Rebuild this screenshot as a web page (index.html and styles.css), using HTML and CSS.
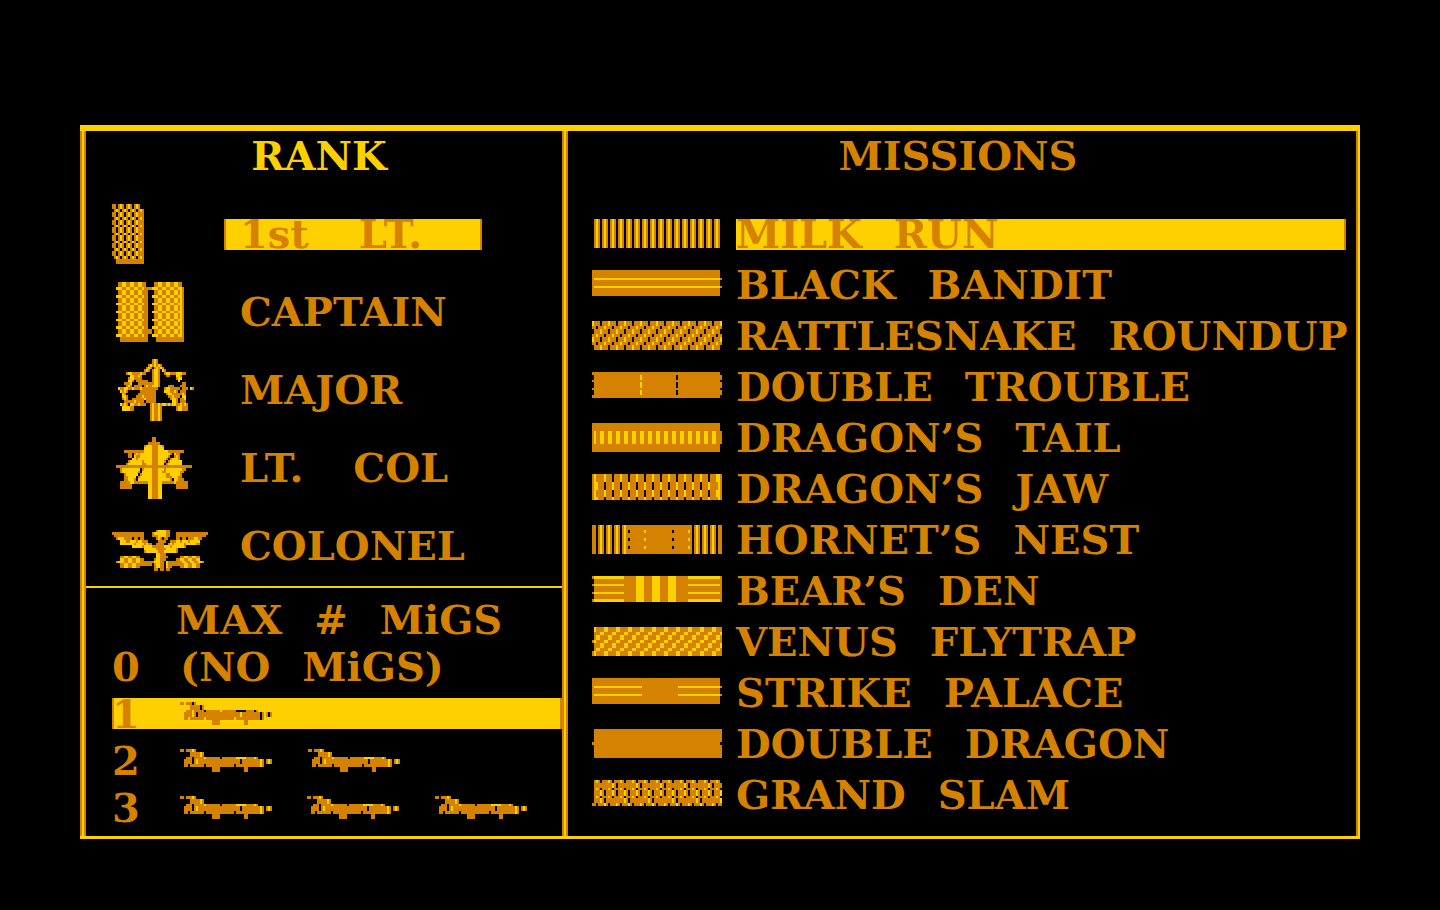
FILE: index.html
```html
<!DOCTYPE html>
<html lang="en">
<head>
<meta charset="utf-8">
<title>Rank and Missions</title>
<link rel="stylesheet" href="styles.css">
</head>
<body>
<main class="frame">
  <div class="side">
    <section class="ranks">
      <h2 class="title title-active">RANK</h2>
      <button class="rank selected" type="button"><span class="insignia" data-sprite="lieutenant"></span><span class="rank-name">1st <span class="word">LT.</span></span></button>
      <button class="rank" type="button"><span class="insignia" data-sprite="captain"></span><span class="rank-name">CAPTAIN</span></button>
      <button class="rank" type="button"><span class="insignia" data-sprite="major"></span><span class="rank-name">MAJOR</span></button>
      <button class="rank" type="button"><span class="insignia" data-sprite="ltcol"></span><span class="rank-name">LT. <span class="word">COL</span></span></button>
      <button class="rank" type="button"><span class="insignia" data-sprite="colonel"></span><span class="rank-name">COLONEL</span></button>
    </section>
    <section class="migs">
      <h2 class="migs-title">MAX <span class="word">#</span> <span class="word">MiGS</span></h2>
      <button class="mig" type="button"><span class="count">0</span><span>(NO <span class="word">MiGS)</span></span></button>
      <button class="mig selected" type="button"><span class="count">1</span><span class="plane" data-sprite="planeDark"></span></button>
      <button class="mig" type="button"><span class="count">2</span><span class="plane" data-sprite="plane"></span><span class="plane" data-sprite="plane"></span></button>
      <button class="mig" type="button"><span class="count">3</span><span class="plane" data-sprite="plane"></span><span class="plane" data-sprite="plane"></span><span class="plane" data-sprite="plane"></span></button>
    </section>
  </div>
  <section class="missions">
    <h2 class="title">MISSIONS</h2>
    <div class="mission-list">
      <button class="mission selected" type="button"><span class="ribbon" data-sprite="milkRun"></span><span class="mission-name">MILK <span class="word">RUN</span></span></button>
      <button class="mission" type="button"><span class="ribbon" data-sprite="blackBandit"></span><span class="mission-name">BLACK <span class="word">BANDIT</span></span></button>
      <button class="mission" type="button"><span class="ribbon" data-sprite="rattlesnake"></span><span class="mission-name">RATTLESNAKE <span class="word">ROUNDUP</span></span></button>
      <button class="mission" type="button"><span class="ribbon" data-sprite="doubleTrouble"></span><span class="mission-name">DOUBLE <span class="word">TROUBLE</span></span></button>
      <button class="mission" type="button"><span class="ribbon" data-sprite="dragonsTail"></span><span class="mission-name">DRAGON’S <span class="word">TAIL</span></span></button>
      <button class="mission" type="button"><span class="ribbon" data-sprite="dragonsJaw"></span><span class="mission-name">DRAGON’S <span class="word">JAW</span></span></button>
      <button class="mission" type="button"><span class="ribbon" data-sprite="hornetsNest"></span><span class="mission-name">HORNET’S <span class="word">NEST</span></span></button>
      <button class="mission" type="button"><span class="ribbon" data-sprite="bearsDen"></span><span class="mission-name">BEAR’S <span class="word">DEN</span></span></button>
      <button class="mission" type="button"><span class="ribbon" data-sprite="venus"></span><span class="mission-name">VENUS <span class="word">FLYTRAP</span></span></button>
      <button class="mission" type="button"><span class="ribbon" data-sprite="strike"></span><span class="mission-name">STRIKE <span class="word">PALACE</span></span></button>
      <button class="mission" type="button"><span class="ribbon" data-sprite="doubleDragon"></span><span class="mission-name">DOUBLE <span class="word">DRAGON</span></span></button>
      <button class="mission" type="button"><span class="ribbon" data-sprite="grandSlam"></span><span class="mission-name">GRAND <span class="word">SLAM</span></span></button>
    </div>
  </section>
</main>
<script src="sprites.js"></script>
</body>
</html>
```
FILE: styles.css
```css
:root {
  --gold: #ffd000;
  --amber: #d48200;
}

* { box-sizing: border-box; }

body {
  margin: 0;
  min-height: 100vh;
  padding: 125px 80px 64px;
  background: #000;
  color: var(--amber);
  font: bold 40px/30px "DejaVu Serif", serif;
}

button {
  border: 0;
  padding: 0;
  background: none;
  color: inherit;
  font: inherit;
  text-align: left;
  white-space: nowrap;
  cursor: pointer;
}

.frame {
  display: grid;
  grid-template-columns: minmax(0, 488fr) minmax(0, 792fr);
  border-top: 6px solid var(--gold);
  border-bottom: 3px solid var(--gold);
}

.side {
  border: solid var(--amber);
  border-width: 0 2px;
  display: flex;
  flex-direction: column;
  box-shadow: inset 2px 0 var(--gold), inset 4px 0 var(--amber), inset -2px 0 var(--gold), inset -4px 0 var(--amber);
  padding: 0 4px;
}

.title {
  margin: 0;
  padding: 10px 10px 0 0;
  font-size: 40px;
  text-align: center;
}

.title-active {
  margin-bottom: 24px;
  color: var(--gold);
}

.ranks {
  display: flex;
  flex-direction: column;
  padding-bottom: 1px;
  border-bottom: 2px solid var(--gold);
}

.rank {
  display: grid;
  grid-template-columns: 112px 258px;
  align-items: center;
  height: 78px;
  padding-left: 26px;
}

.rank-name {
  height: 31px;
  padding-left: 16px;
}

.rank.selected .rank-name {
  background: var(--gold);
  box-shadow: inset 2px 0 var(--amber), inset -2px 0 var(--amber);
}

.word { margin-left: 18px; }

.rank .word { margin-left: 36px; }

.migs {
  display: flex;
  flex-direction: column;
  gap: 16px;
  padding: 16px 0 13px 26px;
}

.migs-title {
  margin: 0;
  padding-left: 64px;
  font-size: 40px;
  line-height: 31px;
}

.mig {
  display: flex;
  align-items: center;
  height: 31px;
}

.mig.selected {
  background: var(--gold);
  box-shadow: inset 2px 0 var(--amber), inset -2px 0 var(--amber);
}

.count { width: 68px; }

.plane { width: 128px; }

.missions {
  border-right: 2px solid var(--gold);
  box-shadow: inset -2px 0 var(--amber);
}

.mission-list {
  display: flex;
  flex-direction: column;
  gap: 20px;
  padding: 48px 12px 0 24px;
}

.mission {
  display: grid;
  grid-template-columns: 144px minmax(0, 1fr);
  align-items: start;
}

.mission-name { height: 31px; }

.mission.selected .mission-name {
  background: var(--gold);
  box-shadow: inset -2px 0 var(--amber);
}

.sprite { display: block; }
```
FILE: sprites.js
```js
// Sprite cells are 2 units wide and 2.6 units high; o = amber, y = gold, k = black.
const COLORS = { o: "#d48200", y: "#ffd000", k: "#000" };

function between(v, a, b) { return v >= a && v <= b; }
function every(c, start, step) { return ((c - start) % step + step) % step === 0; }

function grid(cols, rows, cell) {
  return Array.from({ length: rows }, (_, r) =>
    Array.from({ length: cols }, (_, c) => cell(c, r)).join(""));
}

function indent(count, rows) { return rows.map(row => ".".repeat(count) + row); }

// Step number for rows grouped as 2,1,2,1,...
function step(r) { return Math.floor(r / 3) * 2 + (r % 3 === 2 ? 1 : 0); }

const plane = [
  "oo.oooyo",
  ".....oooooyo",
  ".....oooooyo",
  "...ooo.oooooyooooooo.oooooooyyyyyooooyo",
  "..oooo.oyooooooooooooooooooooo.oooooooooyo.oyo",
  "..oooo.oyooooooooooooooooooooo.oooooooooyo.oyo",
  "..oo.ooooooo.oooooooooooooo.ooooooooooooyo",
  "................oooo............oo",
  "................oooo............oo"
];

const SPRITES = {
  plane,
  planeDark: plane.map(row => row.replace(/y/g, "k")),

  lieutenant: grid(16, 23, (c, r) => {
    if (r > 20) return c > 1 ? "o" : ".";
    if (r < 2 && c > 13) return ".";
    const thin = r % 3 === 2;
    if (c > 13) return thin && c === 14 ? "y" : "o";
    if (c % 2) return "o";
    if (thin) return c % 4 === 2 ? "y" : ".";
    return c === 0 ? "o" : c % 4 === 0 ? "y" : ".";
  }),

  captain: indent(2, grid(34, 23, (c, r) => {
    const n = c % 18;
    if (c > 15 && c < 18) return r === 2 || r === 18 || r === 19 ? "o" : ".";
    if (r > 20) return n > 1 ? "o" : ".";
    if (n === 0) return r % 3 === 2 ? "y" : ".";
    if (n === 15) return r > 1 ? "o" : ".";
    if (n === 14) return c > 18 && r > 1 ? "y" : "o";
    const odd = Math.floor((n - 1) / 2) % 2;
    return (r % 3 === 2) !== Boolean(odd) ? "y" : "o";
  })),

  major: indent(3, [
    ".................oyo",
    ".................oyo",
    "...............oyoyoyo",
    "..............oyo.oyoyo",
    ".............oyo.oyyo.yo",
    "....oyyooooyoo...oyyo..oyyoooyyyoo",
    "......yyooyo.....oyyo...oo...yyo",
    ".....oyyoooo.....oyyo........oyy",
    ".....yyo.oooooo..oyyo.........y",
    "...oooy...ooooooooyyo...........oo",
    "....oyo.oooo.oyooyyyo....ooo...ooo",
    "yooyyooyoooyoooooooo...oyyooooo.ooo.yo",
    ".yoyo......oooooooo....yyyooyo.ooo",
    "..yo......ooooooooo.....oyyoooooyo",
    "..yyo....oooyoooooo......ooyooo.yy",
    "..oyo..ooooooyooooo.......oyyo.ooy",
    "...oooooyoooo.ooooo........yyo.ooo",
    ".yoyo.yyooyooo..oyooyoyyoyoyyooyoyo",
    "..yyyyoo........oyooyo.......oyyooo",
    "..yyyyoo........oyooyo.......oyyooo",
    "................oyooyo",
    "................oyooyo",
    "................oyooyo",
    "................oyooyo"
  ]),

  ltcol: indent(2, [
    "..................oo",
    "..................oo",
    "................oooooo",
    "..............oyyyoooyyo",
    "..............yyyyoooyyy",
    "....ooooooooooyyyyoooyyyyyoooooooo",
    "......oo.oyoyyyyyyoooyyyyyyo.yoo",
    "......oo.yooyyyyyyoooyyyyyo..oyo",
    "........yyoyyyyyyyoooyyyyo.oyyyo",
    "......oyyyyyyoyyyyoooyyyo.oyyyyyy",
    ".....oyyyyyyyooyyyoooyyy.oyyyyyyy",
    "oooooooooooooooooooooooooooooooooooooo",
    "..oyyyyyyyyy.oyyyyoooyyyoyyyyyyyyoo",
    "..oyyyyyyyyo.yyyyyoooyyooyyyyyyyoo",
    "....oyyyyyy.oyyyyyoooyyyyooyyyyyo",
    "....ooyyyy.oyyyyyyoooyyyyoooyyyoo",
    "....ooyyyo.yyyyyyyoooyyyyyyo.yyooo",
    "..oooooyyoooooooyyoooyyooooooyoooooo",
    "..oooooo........yyoooyy.......oooooo",
    "..oooooo........yyoooyy.......oooooo",
    "................yyoooyy",
    "................yyoooyy",
    "................yyoooyy",
    "................yyoooyy"
  ]),

  colonel: [
    "", "", "",
    "......................oyyyyoo",
    "oooooooooooooooo....oyyyyyyoo...oooooooooooooooo",
    ".ooooooooooooooo....oooyyyyoo...ooooooooooooooo",
    "..oyyyoooo.oo.oo......oyo.oo....oo.oo.oooyyoo",
    "....yyyooyyyoyyooo.....oooo..oooyyoyyyoyyyyy",
    "....yyyyyyyoyyyyoyoo..oooo..oyoyyyyyoyyyyyoo",
    "..........yyyyyoyyyyooooooyyyoyyyyyyo",
    "................yyyyyyoooooyyyyyo",
    "................oyyyyyyoooyyyyyyo",
    "......................yyooo",
    "....ooyyooyyoo........yyoooo......ooyyooyyoo",
    "....yyooyyooyyoo.....oyyooo.....ooyyooyyooyy",
    "..oyyyooyyooyyoooooooyyyoo.yoooooooyyooyyooyyo",
    "....ooyyooyyoooooooo.oyyoo.yooooooooyyooyyoo",
    "....ooyyooyyoo.......oyyoo.yoo....ooyyooyyoo",
    ".....................oo.oo.oo"
  ],

  milkRun: grid(65, 11, c => c > 63 ? "." : ".oyo"[c % 4]),

  blackBandit: grid(65, 10, (c, r) => {
    const line = r === 3 || r === 6;
    if (c === 64) return line ? "o" : ".";
    return line && c > 0 ? "y" : "o";
  }),

  rattlesnake: grid(65, 11, (c, r) => {
    const gap = 4 - 2 * step(r);
    if (every(c, gap, 8)) return ".";
    return every(c, gap + 4, 8) ? "y" : "o";
  }),

  doubleTrouble: grid(65, 10, (c, r) => {
    const dash = r % 3 !== 0;
    if (c === 64) return dash ? "o" : ".";
    if (dash && (c === 0 || c === 42)) return ".";
    return dash && c === 24 ? "y" : "o";
  }),

  dragonsTail: grid(65, 11, (c, r) => {
    const mid = between(r, 3, 7);
    if (c === 64) return mid ? "o" : ".";
    return mid && (c === 1 || (between(c, 4, 61) && c % 4 < 2)) ? "y" : "o";
  }),

  dragonsJaw: grid(65, 10, (c, r) => {
    const odd = Math.floor(r / 3) % 2 === 1;
    if (c === 1 || c === 63 || (c === 2 && odd) || (c === 62 && !odd)) return "y";
    if (!between(c, 6, 60)) return "o";
    if (every(c, odd ? 6 : 2, 8)) return ".";
    return every(c, odd ? 2 : 6, 8) ? "y" : "o";
  }),

  hornetsNest: grid(65, 11, (c, r) => {
    if (c < 17 || c > 49) {
      if (c % 4 === 2) return ".";
      return c % 4 === 0 && between(c, 1, 62) ? "y" : "o";
    }
    const dot = r === 2 || r === 5 || r === 8;
    if (dot && (c === 18 || c === 40)) return ".";
    return dot && (c === 26 || c === 48) ? "y" : "o";
  }),

  bearsDen: grid(65, 10, (c, r) => {
    const line = r % 3 === 0;
    if (c === 0) return line ? "o" : ".";
    if (between(c, 22, 25) || between(c, 30, 33) || between(c, 38, 41)) return "y";
    return line && (c < 16 || between(c, 48, 63)) ? "y" : "o";
  }),

  venus: grid(65, 11, (c, r) => {
    if (c === 0) return r === 5 || r > 8 ? "o" : ".";
    const start = -2 * step(r);
    return every(c, start, 6) || every(c, start + 1, 6) ? "y" : "o";
  }),

  strike: grid(65, 10, (c, r) => {
    const line = r === 3 || r === 6;
    if (c === 64) return line ? "o" : ".";
    return line && (between(c, 1, 24) || c > 42) ? "y" : "o";
  }),

  doubleDragon: grid(65, 11, (c, r) =>
    (c === 0 && r !== 5) || (c === 64 && r === 5) ? "." : "o"),

  grandSlam: grid(65, 10, (c, r) => {
    if (c === 0) return r === 9 ? "o" : ".";
    const [gold, gap, period] = [
      [2, 4, 6], [10, 12, 12], [10, 12, 12], [2, 4, 6], [4, 6, 6],
      [4, 6, 6], [2, 4, 6], [4, 6, 12], [4, 6, 12], [0, 2, 6]
    ][r];
    if (every(c, gap, period)) return ".";
    return every(c, gold, period) ? "y" : "o";
  })
};

function spriteSvg(rows) {
  const cols = Math.max(...rows.map(r => r.length));
  const width = cols * 2;
  const height = Math.round(rows.length * 2.6);
  let shapes = "";
  rows.forEach((row, y) => {
    for (const run of row.matchAll(/o+|y+|k+/g)) {
      shapes += `<rect x="${run.index}" y="${y}" width="${run[0].length}" height="1" fill="${COLORS[run[0][0]]}"/>`;
    }
  });
  return `<svg class="sprite" aria-hidden="true" width="${width}" height="${height}" viewBox="0 0 ${cols} ${rows.length}" preserveAspectRatio="none" shape-rendering="crispEdges">${shapes}</svg>`;
}

document.querySelectorAll("[data-sprite]").forEach(el => {
  el.innerHTML = spriteSvg(SPRITES[el.dataset.sprite]);
});
```
